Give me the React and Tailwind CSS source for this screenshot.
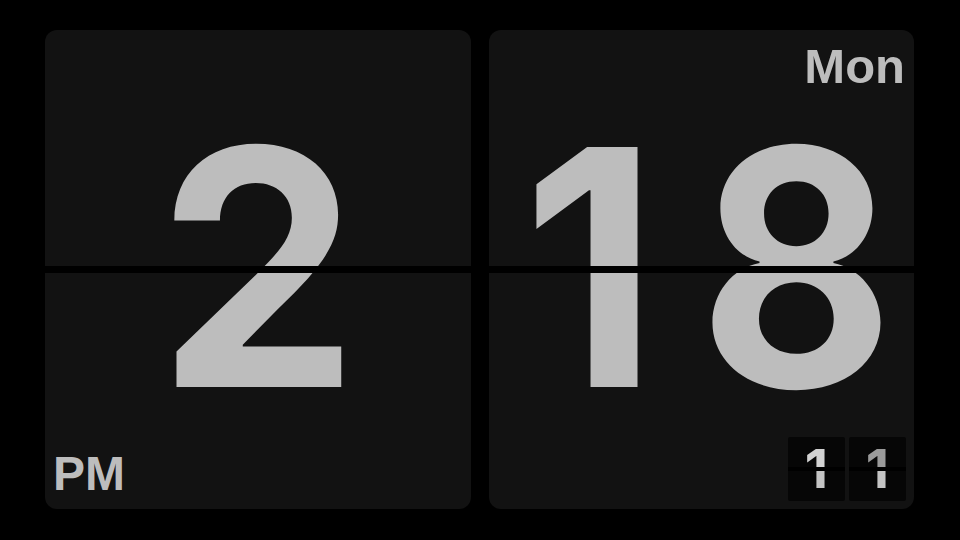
const labelFont = { fontFamily: '"Liberation Sans", Arial, sans-serif' }
const digitFont = { fontFamily: 'Inter, "Liberation Sans", sans-serif' }

// Inter runs a little wide next to the reference face, so each glyph is squeezed on its own
const squeeze = {
    '1': 'scale-x-[0.956]',
    '2': 'scale-x-[0.97]',
    '8': 'scale-x-[0.91]',
}

function MiniDigit({ value, topColor }) {
    return (
        <div className="w-[57px] h-[64px] bg-[#060606] rounded-[2px] flex flex-col overflow-hidden" style={digitFont}>
            <div className="h-[30px] overflow-hidden">
                <div className={`h-[64px] flex items-center justify-center text-[54px] leading-none font-bold ${topColor}`}>{value}</div>
            </div>
            <div className="h-[4px] bg-black"></div>
            <div className="h-[30px] overflow-hidden">
                <div className="h-[64px] -mt-[34px] flex items-center justify-center text-[54px] leading-none font-bold text-[#c4c4c4]">{value}</div>
            </div>
        </div>
    )
}

function Card({ children }) {
    return (
        <div className="relative flex-1 rounded-[12px] bg-[#121212] overflow-hidden flex items-center justify-center">
            {children}
            {/* split line */}
            <div className="absolute left-0 right-0 top-[236px] h-[7px] bg-black"></div>
        </div>
    )
}

function BigDigits({ text, className }) {
    return (
        <div className={`flex ${className}`} style={digitFont}>
            {text.split('').map((d, i) => (
                <span key={i} className={`text-[330px] leading-none font-bold text-[#bdbdbd] ${squeeze[d]}`}>{d}</span>
            ))}
        </div>
    )
}

export default function App() {
    return (
        <div className="w-[960px] h-[540px] bg-black flex gap-[18px] pl-[45px] pr-[46px] pt-[30px] pb-[31px]" style={labelFont}>
            <Card>
                <BigDigits text="2" className="-translate-y-[3px]" />
                <span className="absolute left-[8px] bottom-[11px] text-[48px] leading-none font-bold text-[#bdbdbd]">PM</span>
            </Card>
            <Card>
                <BigDigits text="18" className="gap-[28px] translate-x-[10px] -translate-y-[3px]" />
                <span className="absolute right-[9px] top-[12px] text-[49px] leading-none font-bold text-[#bdbdbd]">Mon</span>
                <div className="absolute right-[8px] bottom-[8px] flex gap-[4px]">
                    <MiniDigit value="1" topColor="text-[#d2d2d2]" />
                    <MiniDigit value="1" topColor="text-[#9a9a9a]" />
                </div>
            </Card>
        </div>
    )
}
